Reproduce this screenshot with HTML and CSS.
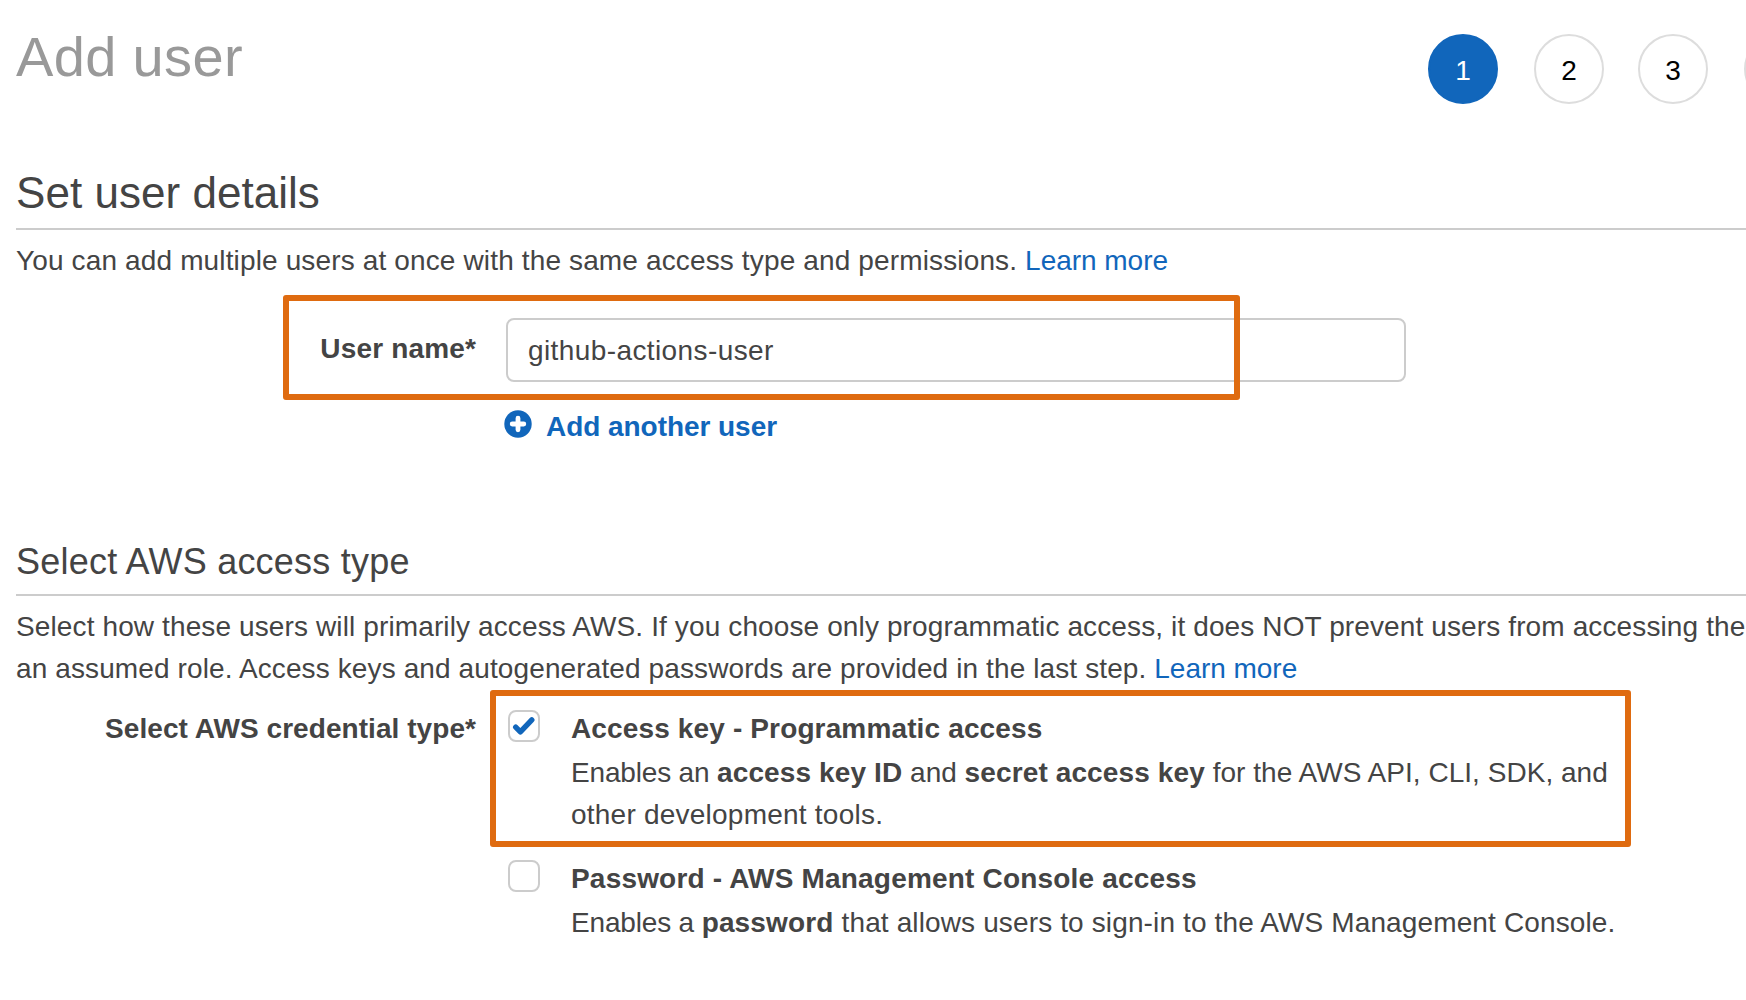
FILE: index.html
```html
<!DOCTYPE html>
<html lang="en">
<head>
<meta charset="utf-8">
<title>Add user</title>
<link rel="stylesheet" href="styles.css">
</head>
<body>
<main class="page">
  <header class="page-header">
    <h1 class="page-title">Add user</h1>
    <ol class="steps">
      <li class="step step-active">1</li>
      <li class="step">2</li>
      <li class="step">3</li>
      <li class="step"></li>
    </ol>
  </header>

  <section class="details">
    <h2 class="section-title">Set user details</h2>
    <p class="intro">You can add multiple users at once with the same access type and permissions. <a class="link" href="#">Learn more</a></p>
    <div class="form-row">
      <label class="form-label name-label" for="user-name">User name*</label>
      <div class="field">
        <input class="text-input" id="user-name" type="text" value="github-actions-user">
        <a class="add-user" href="#">
          <svg class="plus-icon" viewBox="0 0 28 28" width="28" height="28" aria-hidden="true">
            <circle cx="14" cy="14" r="13.7" fill="#1166bb"/>
            <path d="M14 8.2v11.6M8.2 14h11.6" stroke="#fff" stroke-width="4.8" stroke-linecap="round"/>
          </svg>
          <span>Add another user</span>
        </a>
      </div>
    </div>
  </section>

  <section class="access">
    <h3 class="subsection-title">Select AWS access type</h3>
    <p class="intro intro-wide">Select how these users will primarily access AWS. If you choose only programmatic access, it does NOT prevent users from accessing the<br>
      <span class="second-line">an assumed role. Access keys and autogenerated passwords are provided in the last step. <a class="link" href="#">Learn more</a></span></p>
    <div class="form-row credential-row">
      <div class="form-label credential-label">Select AWS credential type*</div>
      <div class="options">
        <div class="option">
          <span class="checkbox" role="checkbox" aria-checked="true" aria-label="Access key">
            <svg class="check-icon" viewBox="0 0 28 28" width="28" height="28" aria-hidden="true">
              <path d="M5.7 15.1l4.7 4.8L21.8 7.9" fill="none" stroke="#1166bb" stroke-width="5.4" stroke-linejoin="round" stroke-linecap="round"/>
            </svg>
          </span>
          <div class="option-body">
            <div class="option-title">Access key - Programmatic access</div>
            <p class="option-text"><span class="lead">Enables an </span><b class="key-id">access key ID</b> and <b class="secret">secret access key</b><span class="tools"> for the AWS API, CLI, SDK, and</span><br><span class="tail">other development tools.</span></p>
          </div>
        </div>
        <div class="option">
          <span class="checkbox" role="checkbox" aria-checked="false" aria-label="Password"></span>
          <div class="option-body">
            <div class="option-title password-title">Password - AWS Management Console access</div>
            <p class="option-text"><span class="lead">Enables a </span><b>password</b><span class="sign-in"> that allows users to sign-in to the AWS Management Console.</span></p>
          </div>
        </div>
      </div>
    </div>
  </section>

  <div class="highlight highlight-name"></div>
  <div class="highlight highlight-key"></div>
</main>
</body>
</html>
```
FILE: styles.css
```css
* {
  box-sizing: border-box;
}

html,
body {
  margin: 0;
  overflow: hidden;
}

body {
  background: #fff;
  color: #444;
  font: 28px/42px "Liberation Sans", Arial, sans-serif;
}

.page {
  position: relative;
  width: 100vw;
  height: 1000px;
  padding: 25px 0 0 16px;
  overflow: hidden;
}

h1,
h2,
h3,
p {
  margin: 0;
  font-weight: 400;
}

.page-header {
  display: flex;
  justify-content: space-between;
  height: 143px;
}

.page-title {
  color: #999;
  font-size: 56px;
  line-height: 64px;
  letter-spacing: 0.35px;
}

.steps {
  display: flex;
  gap: 36px;
  margin: 9px -68px 0 0;
  padding: 0;
  list-style: none;
}

.step {
  width: 70px;
  height: 70px;
  border: 2px solid #ddd;
  border-radius: 50%;
  color: #000;
  line-height: 69px;
  text-align: center;
}

.step:nth-child(3) {
  margin-left: -2px;
}

.step-active {
  border-color: #1166bb;
  background: #1166bb;
  color: #fff;
}

.section-title {
  padding-bottom: 10px;
  border-bottom: 2px solid #ccc;
  font-size: 44px;
  line-height: 50px;
  letter-spacing: 0.04px;
}

.subsection-title {
  padding-bottom: 11px;
  border-bottom: 2px solid #ccc;
  font-size: 36px;
  line-height: 42px;
  letter-spacing: 0.22px;
}

.intro {
  margin-top: 10px;
  letter-spacing: 0.14px;
  white-space: nowrap;
}

.intro-wide {
  letter-spacing: 0.12px;
}

.second-line {
  letter-spacing: 0.112px;
}

.link {
  color: #1166bb;
  letter-spacing: -0.03px;
  text-decoration: none;
}

.form-row {
  display: flex;
  gap: 30px;
  margin-top: 36px;
}

.form-label {
  width: 460px;
  font-weight: 700;
  text-align: right;
  white-space: nowrap;
}

.name-label {
  padding-top: 10px;
  letter-spacing: 0.16px;
}

.field {
  display: flex;
  flex-direction: column;
  align-items: flex-start;
}

.text-input {
  width: 900px;
  height: 64px;
  padding: 2px 20px 0;
  border: 2px solid #ccc;
  border-radius: 8px;
  outline: 0;
  background: #fff;
  color: #444;
  font: inherit;
  letter-spacing: 0.4px;
}

.add-user {
  display: flex;
  gap: 14px;
  margin: 24px 0 0 -2px;
  color: #1166bb;
  font-weight: 700;
  letter-spacing: -0.05px;
  text-decoration: none;
}

.plus-icon {
  display: block;
  margin-top: 4px;
}

.access {
  margin-top: 93px;
}

.credential-row {
  gap: 32px;
  margin-top: 18px;
}

.credential-label {
  letter-spacing: 0.06px;
}

.options {
  display: flex;
  flex-direction: column;
  gap: 22px;
}

.option {
  display: flex;
  gap: 31px;
}

.checkbox {
  width: 32px;
  height: 32px;
  margin-top: 2px;
  border: 2px solid #ccc;
  border-radius: 8px;
}

.check-icon {
  display: block;
}

.option-body {
  white-space: nowrap;
}

.option-title {
  font-weight: 700;
  letter-spacing: 0.14px;
}

.password-title {
  letter-spacing: 0.19px;
}

.option-text {
  margin-top: 2px;
}

.option-text b {
  letter-spacing: 0.16px;
}

.option-text .key-id {
  letter-spacing: 0.12px;
}

.option-text .secret {
  letter-spacing: 0.12px;
}

.lead {
  letter-spacing: -0.17px;
}

.tools {
  letter-spacing: 0.03px;
}

.tail {
  letter-spacing: 0.23px;
}

.sign-in {
  letter-spacing: 0.13px;
}

/* Annotation frames drawn over the form */
.highlight {
  position: absolute;
  border: 6px solid #df6b10;
  border-radius: 3px;
  pointer-events: none;
}

.highlight-name {
  top: 295px;
  left: 283px;
  width: 956.5px;
  height: 105px;
}

.highlight-key {
  top: 690px;
  left: 490px;
  width: 1141px;
  height: 157px;
}
```
